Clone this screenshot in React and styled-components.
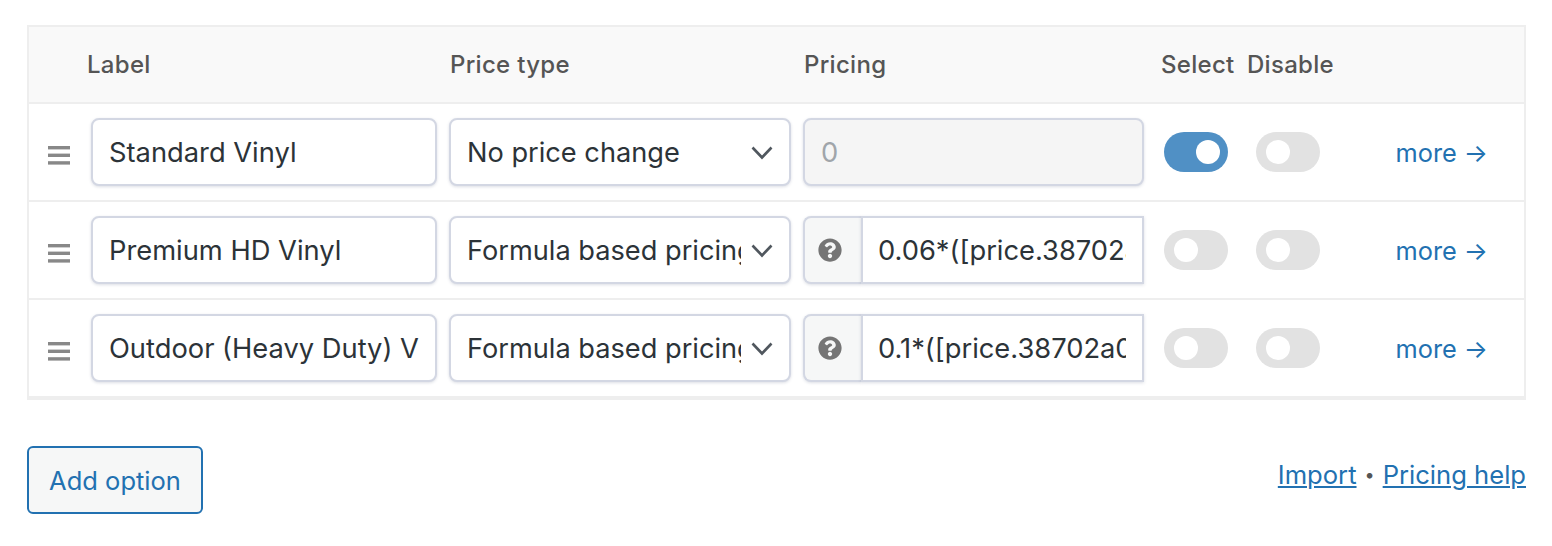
import React from 'react'
import styled, { createGlobalStyle } from 'styled-components'
import { FaQuestionCircle } from 'react-icons/fa'

const rows = [
  { label: 'Standard Vinyl', type: 'No price change', price: '0', flat: true, selected: true },
  { label: 'Premium HD Vinyl', type: 'Formula based pricing', price: '0.06*([price.38702a0c]+[price.38702a0d])' },
  { label: 'Outdoor (Heavy Duty) Vinyl', type: 'Formula based pricing', price: '0.1*([price.38702a0c]+[price.38702a0d])' },
]

const heads = [
  { text: 'Label', width: 363 },
  { text: 'Price type', width: 354 },
  { text: 'Pricing', width: 357 },
  { text: 'Select', width: 86 },
  { text: 'Disable', width: 100 },
]

export default function App() {
  return (
    <Page>
      <GlobalStyle />
      <Table>
        <HeadRow>
          {heads.map((h) => (
            <HeadCell key={h.text} width={h.width}>{h.text}</HeadCell>
          ))}
        </HeadRow>
        {rows.map((row) => (
          <Row key={row.label}>
            <Handle viewBox="0 0 22 19">
              <rect y="0" width="22" height="3.4" />
              <rect y="7.6" width="22" height="3.4" />
              <rect y="15.2" width="22" height="3.4" />
            </Handle>
            <TextInput defaultValue={row.label} />
            <SelectWrap>
              <Select defaultValue={row.type}>
                <option>No price change</option>
                <option>Formula based pricing</option>
              </Select>
              <Chevron viewBox="0 0 22 14">
                <path d="M1.5 1.5 11 11.5l9.5-10" />
              </Chevron>
            </SelectWrap>
            {row.flat ? (
              <DisabledInput disabled defaultValue={row.price} />
            ) : (
              <PriceGroup>
                <Addon><FaQuestionCircle size={24} /></Addon>
                <PriceInput defaultValue={row.price} />
              </PriceGroup>
            )}
            <Toggle $on={row.selected}><Knob /></Toggle>
            <Toggle><Knob /></Toggle>
            <More href="#">more →</More>
          </Row>
        ))}
      </Table>
      <Footer>
        <AddButton>Add option</AddButton>
        <Links>
          <LinkText href="#">Import</LinkText>
          <Dot>•</Dot>
          <LinkText href="#">Pricing help</LinkText>
        </Links>
      </Footer>
    </Page>
  )
}

const GlobalStyle = createGlobalStyle`
  body {
    margin: 0;
    background: #fff;
    font-family: Inter, "Liberation Sans", sans-serif;
  }
`

const Page = styled.div`
  padding: 25px 26px 0 27px;
`

const Table = styled.div`
  border: 2px solid #eeeeee;
`

const HeadRow = styled.div`
  display: flex;
  align-items: center;
  height: 75px;
  padding-left: 58px;
  background: #f9f9f9;
  border-bottom: 2px solid #eeeeee;
`

const HeadCell = styled.div`
  flex: 0 0 ${(p) => p.width}px;
  font-size: 24px;
  font-weight: 500;
  letter-spacing: 0.3px;
  color: #555555;
`

const Row = styled.div`
  display: grid;
  grid-template-columns: 346px 342px 341px 72px 80px 1fr;
  align-items: center;
  column-gap: 12px;
  height: 96px;
  padding-left: 62px;
  border-bottom: 2px solid #eeeeee;
  position: relative;
`

const Handle = styled.svg`
  position: absolute;
  left: 19px;
  top: 42px;
  width: 22px;
  height: 19px;
  fill: #888888;
`

const fieldStyle = `
  box-sizing: border-box;
  height: 68px;
  border: 2px solid #d3d7e3;
  border-radius: 8px;
  background: #fff;
  box-shadow: 0 1px 3px rgba(60, 70, 110, 0.18);
  font-family: Inter, "Liberation Sans", sans-serif;
  font-size: 27.3px;
  color: #2c3338;
  outline: none;
`

const TextInput = styled.input`
  ${fieldStyle}
  width: 100%;
  padding: 0 16px;
`

const SelectWrap = styled.div`
  position: relative;
`

const Select = styled.select`
  ${fieldStyle}
  width: 100%;
  padding: 0 48px 0 16px;
  font-size: 27.2px;
  appearance: none;
`

const Chevron = styled.svg`
  position: absolute;
  right: 18px;
  top: 28px;
  width: 22px;
  height: 14px;
  fill: none;
  stroke: #50575e;
  stroke-width: 2.6;
  pointer-events: none;
`

const DisabledInput = styled.input`
  ${fieldStyle}
  width: 100%;
  padding: 0 16px;
  background: #f5f5f5;
  color: #a0a5aa;
`

const PriceGroup = styled.div`
  display: flex;
  height: 68px;
`

const Addon = styled.div`
  box-sizing: border-box;
  flex: 0 0 58px;
  display: flex;
  align-items: center;
  padding-left: 13px;
  border: 2px solid #d3d7e3;
  border-right: 0;
  border-radius: 8px 0 0 8px;
  background: #f6f7f7;
  box-shadow: 0 1px 3px rgba(60, 70, 110, 0.18);
  color: #757575;
`

const PriceInput = styled.input`
  ${fieldStyle}
  flex: 1;
  min-width: 0;
  padding: 0 16px 0 15px;
  border-radius: 0;
`

const Toggle = styled.div`
  box-sizing: border-box;
  display: flex;
  align-items: center;
  justify-content: ${(p) => (p.$on ? 'flex-end' : 'flex-start')};
  justify-self: end;
  width: 64px;
  height: 40px;
  padding: 0 8px 0 10px;
  border-radius: 20px;
  background: ${(p) => (p.$on ? '#5090c5' : '#e2e2e2')};
`

const Knob = styled.span`
  width: 24px;
  height: 24px;
  border-radius: 50%;
  background: #fff;
`

const More = styled.a`
  justify-self: end;
  margin: 0 36px 0 0;
  font-size: 25.3px;
  color: #2271b1;
  text-decoration: none;
`

const Footer = styled.div`
  display: flex;
  justify-content: space-between;
  align-items: flex-start;
  margin-top: 46px;
`

const AddButton = styled.button`
  box-sizing: border-box;
  width: 176px;
  height: 68px;
  border: 2px solid #2271b1;
  border-radius: 6px;
  background: #f6f7f7;
  font-family: Inter, "Liberation Sans", sans-serif;
  font-size: 25.5px;
  color: #2271b1;
`

const Links = styled.div`
  display: flex;
  align-items: center;
  gap: 8px;
  margin-top: 13px;
  font-size: 25.6px;
`

const LinkText = styled.a`
  color: #2271b1;
  text-decoration: underline;
`

const Dot = styled.span`
  color: #555555;
  font-size: 18px;
`
